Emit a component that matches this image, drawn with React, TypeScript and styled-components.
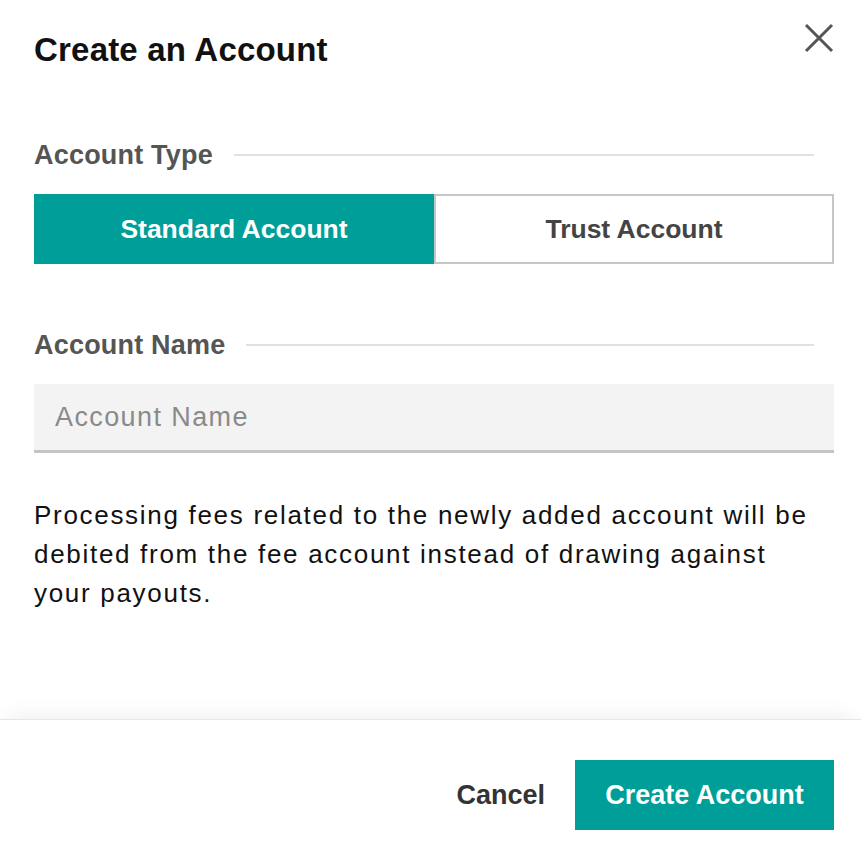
import React, { useState } from 'react';
import styled, { createGlobalStyle } from 'styled-components';

const GlobalStyle = createGlobalStyle`
  html, body {
    margin: 0;
    padding: 0;
    background: #ffffff;
  }
  body {
    font-family: "Liberation Sans", Arial, Helvetica, sans-serif;
    color: #111111;
  }
`;

const Dialog = styled.div`
  width: 861px;
  height: 846px;
  display: flex;
  flex-direction: column;
  background: #ffffff;
  box-sizing: border-box;
`;

const Body = styled.div`
  flex: 1;
  padding: 0 27px 0 34px;
  display: flex;
  flex-direction: column;
`;

const Header = styled.div`
  display: flex;
  align-items: flex-start;
  justify-content: space-between;
  padding-top: 30px;
`;

const Title = styled.h2`
  margin: 0;
  font-size: 33px;
  font-weight: 700;
  line-height: 40px;
  color: #111111;
  letter-spacing: 0.2px;
`;

const CloseButton = styled.button`
  width: 30px;
  height: 30px;
  margin-top: -7px;
  padding: 0;
  border: none;
  background: transparent;
  cursor: pointer;
  display: flex;
  align-items: center;
  justify-content: center;
`;

const SectionHeading = styled.div<{ $top: number }>`
  display: flex;
  align-items: center;
  gap: 21px;
  margin-top: ${(p) => p.$top}px;
  padding-right: 20px;
`;

const SectionLabel = styled.span`
  font-size: 27px;
  font-weight: 700;
  color: #555555;
  line-height: 32px;
  letter-spacing: 0.2px;
  white-space: nowrap;
`;

const Rule = styled.div`
  flex: 1;
  height: 2px;
  background: #e0e0e0;
`;

const Toggle = styled.div`
  display: grid;
  grid-template-columns: 1fr 1fr;
  margin-top: 23px;
  height: 70px;
`;

const ToggleOption = styled.button<{ $active: boolean }>`
  font-family: inherit;
  font-size: 26.5px;
  font-weight: 700;
  cursor: pointer;
  box-sizing: border-box;
  background: ${(p) => (p.$active ? '#009e98' : '#ffffff')};
  color: ${(p) => (p.$active ? '#ffffff' : '#444444')};
  border: ${(p) => (p.$active ? 'none' : '2px solid #c6c6c6')};
  margin: 0;
  padding: 0;
`;

const Input = styled.input`
  margin-top: 23px;
  height: 69px;
  box-sizing: border-box;
  width: 100%;
  border: none;
  border-bottom: 3px solid #c4c4c4;
  background: #f3f3f3;
  padding: 0 20px 0 21px;
  font-family: inherit;
  font-size: 27px;
  letter-spacing: 1.4px;
  color: #111111;
  outline: none;

  &::placeholder {
    color: #8a8a8a;
  }
`;

const Note = styled.p`
  margin: 43px 0 0;
  padding-right: 20px;
  font-size: 26px;
  line-height: 39px;
  letter-spacing: 1.7px;
  color: #111111;
`;

const Footer = styled.div`
  height: 127px;
  display: flex;
  align-items: center;
  justify-content: flex-end;
  gap: 30px;
  padding: 24px 27px 0 0;
  box-sizing: border-box;
  border-top: 1px solid #e6e6e6;
  box-shadow: 0 -12px 20px -10px rgba(0, 0, 0, 0.08);
`;

const TextButton = styled.button`
  font-family: inherit;
  font-size: 27px;
  font-weight: 700;
  color: #333333;
  background: transparent;
  border: none;
  cursor: pointer;
  padding: 0;
`;

const PrimaryButton = styled.button`
  font-family: inherit;
  font-size: 27px;
  font-weight: 700;
  color: #ffffff;
  background: #009e98;
  border: none;
  cursor: pointer;
  width: 259px;
  height: 70px;
  padding: 0;
`;

const CloseIcon = () => (
  <svg width="30" height="30" viewBox="0 0 30 30" fill="none">
    <path d="M2 2 L28 28 M28 2 L2 28" stroke="#555555" strokeWidth="3" strokeLinecap="butt" />
  </svg>
);

export default function App() {
  const [type, setType] = useState<'standard' | 'trust'>('standard');
  const [name, setName] = useState('');

  return (
    <>
      <GlobalStyle />
      <Dialog>
        <Body>
          <Header>
            <Title>Create an Account</Title>
            <CloseButton aria-label="Close">
              <CloseIcon />
            </CloseButton>
          </Header>

          <SectionHeading $top={69}>
            <SectionLabel>Account Type</SectionLabel>
            <Rule />
          </SectionHeading>
          <Toggle>
            <ToggleOption $active={type === 'standard'} onClick={() => setType('standard')}>
              Standard Account
            </ToggleOption>
            <ToggleOption $active={type === 'trust'} onClick={() => setType('trust')}>
              Trust Account
            </ToggleOption>
          </Toggle>

          <SectionHeading $top={65}>
            <SectionLabel>Account Name</SectionLabel>
            <Rule />
          </SectionHeading>
          <Input
            placeholder="Account Name"
            value={name}
            onChange={(e) => setName(e.target.value)}
          />

          <Note>
            Processing fees related to the newly added account will be debited from the fee
            account instead of drawing against your payouts.
          </Note>
        </Body>

        <Footer>
          <TextButton>Cancel</TextButton>
          <PrimaryButton>Create Account</PrimaryButton>
        </Footer>
      </Dialog>
    </>
  );
}
